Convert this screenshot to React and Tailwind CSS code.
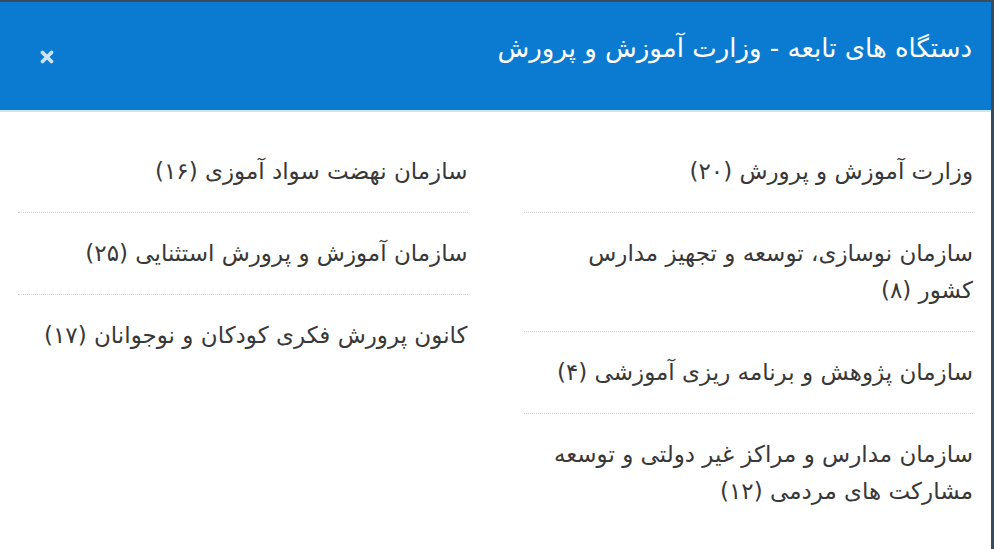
import { X } from "lucide-react"

const rightItems = [
  "وزارت آموزش و پرورش (۲۰)",
  "سازمان نوسازی، توسعه و تجهیز مدارس کشور\u00A0(۸)",
  "سازمان پژوهش و برنامه ریزی آموزشی (۴)",
  "سازمان مدارس و مراکز غیر دولتی و توسعه مشارکت های مردمی (۱۲)",
]

const leftItems = [
  "سازمان نهضت سواد آموزی (۱۶)",
  "سازمان آموزش و پرورش استثنایی (۲۵)",
  "کانون پرورش فکری کودکان و نوجوانان (۱۷)",
]

function OrgList({ items }) {
  return (
    <ul>
      {items.map((item, i) => (
        <li
          key={i}
          className={`py-[22px] text-[23px] leading-[37px] text-[#383838] ${
            i < items.length - 1 ? "border-b border-dotted border-[#d4d4d4]" : ""
          }`}
        >
          {item}
        </li>
      ))}
    </ul>
  )
}

export default function App() {
  return (
    <div className="min-h-screen bg-[#3a4b5a] pt-[2px] pr-[3px]" style={{ fontFamily: '"DejaVu Sans", sans-serif' }}>
      <div dir="rtl" className="min-h-[547px] bg-white">
        {/* Header */}
        <div className="flex h-[110px] items-start justify-between border-b-2 border-[#cfe6f7] bg-[#0a7bd0] pl-[38px] pr-[19px] pt-[27px]">
          <h2 className="text-[26px] leading-[38px] text-white">
            دستگاه های تابعه - وزارت آموزش و پرورش
          </h2>
          <button className="mt-[19px] text-[#cde2f4]">
            <X className="h-[18px] w-[18px]" strokeWidth={5} />
          </button>
        </div>

        {/* Body */}
        <div className="grid grid-cols-2 gap-[56px] px-[18px] pt-[19px]">
          <OrgList items={rightItems} />
          <OrgList items={leftItems} />
        </div>
      </div>
    </div>
  )
}
